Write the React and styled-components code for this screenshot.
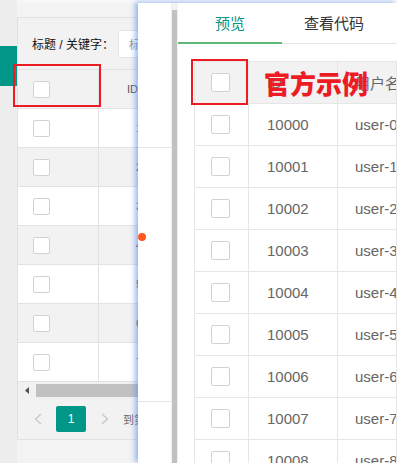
import styled, { createGlobalStyle } from "styled-components";

const GlobalStyle = createGlobalStyle`
  body {
    margin: 0;
    background: #f0f0f0;
    font-family: "Liberation Sans", "Noto Sans CJK SC", sans-serif;
  }
`;

const Screen = styled.div`
  position: relative;
  width: 397px;
  height: 463px;
  overflow: hidden;
  background: #efefef;
`;

/* ---------- page under the layer ---------- */

const Page = styled.div`
  display: flex;
  height: 100%;
`;

const Side = styled.div`
  flex: 0 0 17px;
  padding-top: 46px;
  background: #ededed;
`;

const SideTab = styled.div`
  height: 40px;
  background: #009688;
`;

const Main = styled.div`
  flex: 0 0 520px;
  padding-top: 14px;
  background: #f3f3f3;
  border-top: 3px solid #f7f7f7;
  box-sizing: border-box;
`;

const Card = styled.div`
  border-top: 1px solid #e2e2e2;
  border-left: 1px solid #e2e2e2;
  background: #f2f2f2;
`;

const SearchRow = styled.div`
  display: flex;
  align-items: center;
  height: 51px;
  padding-left: 14px;
`;

const Label = styled.span`
  font-size: 12px;
  color: #111;
  margin-right: 4px;
`;

const SearchInput = styled.div`
  width: 180px;
  height: 28px;
  box-sizing: border-box;
  display: flex;
  align-items: center;
  padding-left: 10px;
  background: #fff;
  border: 1px solid #e6e6e6;
  font-size: 11px;
  color: #999;
`;

const LeftRow = styled.div`
  display: grid;
  grid-template-columns: 81px 1fr;
  height: ${(p) => (p.head ? 40 : 39)}px;
  box-sizing: border-box;
  border-top: ${(p) => (p.head ? "1px solid #e2e2e2" : "none")};
  border-bottom: 1px solid #e2e2e2;
  background: ${(p) => (p.gray ? "#f2f2f2" : "#fff")};
`;

const LeftCell = styled.div`
  display: flex;
  align-items: center;
  padding-left: ${(p) => p.pad}px;
  border-right: ${(p) => (p.first ? "1px solid #e2e2e2" : "none")};
  font-size: 11px;
  color: #555;
`;

const Check = styled.span`
  display: inline-block;
  width: ${(p) => p.size}px;
  height: ${(p) => p.size}px;
  box-sizing: border-box;
  border: 1px solid #d2d2d2;
  border-radius: 2px;
  background: #fff;
`;

const HScroll = styled.div`
  display: flex;
  align-items: center;
  height: 17px;
  background: #f1f1f1;
`;

const ScrollArrow = styled.div`
  flex: 0 0 17px;
  display: flex;
  justify-content: center;
  align-items: center;
`;

const HThumb = styled.div`
  flex: 1;
  height: 13px;
  margin-left: 1px;
  background: #c1c1c1;
`;

const Pager = styled.div`
  display: flex;
  align-items: center;
  gap: 3px;
  height: 40px;
  padding-left: 4px;
  border-bottom: 1px solid #e2e2e2;
`;

const PageArrow = styled.div`
  flex: 0 0 31px;
  display: flex;
  justify-content: center;
  align-items: center;
`;

const PageNum = styled.div`
  width: 30px;
  height: 26px;
  border-radius: 2px;
  background: #009688;
  color: #fff;
  font-size: 12px;
  display: flex;
  align-items: center;
  justify-content: center;
`;

const PageText = styled.span`
  font-size: 11px;
  color: #666;
`;

/* ---------- layer ---------- */

const Layer = styled.div`
  position: absolute;
  left: 138px;
  top: 3px;
  right: 0;
  bottom: 0;
  display: flex;
  background: #fff;
  box-shadow: -3px -1px 5px rgba(90, 145, 240, 0.6);
`;

const LayerNav = styled.div`
  flex: 0 0 33px;
  display: flex;
  flex-direction: column;
`;

const NavBlock = styled.div`
  height: ${(p) => p.h}px;
  border-bottom: 1px solid #e6e6e6;
`;

const Dot = styled.span`
  display: block;
  width: 8px;
  height: 8px;
  margin-top: 85px;
  border-radius: 50%;
  background: #ff5722;
`;

const VScroll = styled.div`
  flex: 0 0 7px;
  display: flex;
  padding-top: 7px;
  box-sizing: border-box;
  background: #f1f1f1;
`;

const VThumb = styled.div`
  width: 5px;
  margin-left: 1px;
  background: #c1c1c1;
`;

const Frame = styled.div`
  flex: 1;
  min-width: 0;
`;

const TabBar = styled.div`
  display: flex;
  height: 41px;
  box-sizing: border-box;
  border-bottom: 1px solid #e6e6e6;
`;

const Tab = styled.div`
  flex: 0 0 104px;
  height: 41px;
  box-sizing: border-box;
  padding-bottom: 3px;
  display: flex;
  align-items: center;
  justify-content: center;
  font-size: 15px;
  color: ${(p) => (p.active ? "#009688" : "#333")};
  box-shadow: ${(p) => (p.active ? "inset 0 -2px 0 #5fb878" : "none")};
`;

const Table = styled.div`
  margin: 17px 0 0 16px;
  border-left: 1px solid #e6e6e6;
`;

const Row = styled.div`
  display: grid;
  grid-template-columns: 54px 89px 1fr;
  height: ${(p) => (p.head ? 43 : 42)}px;
  box-sizing: border-box;
  border-top: ${(p) => (p.head ? "1px solid #e6e6e6" : "none")};
  border-bottom: 1px solid #e6e6e6;
  background: ${(p) => (p.head ? "#f2f2f2" : "#fff")};
`;

const Cell = styled.div`
  display: flex;
  align-items: center;
  padding-left: ${(p) => p.pad}px;
  border-right: 1px solid #e6e6e6;
  font-size: 15px;
  color: #666;
  white-space: nowrap;
  overflow: hidden;
`;

/* ---------- annotations ---------- */

const RedBox = styled.div`
  position: absolute;
  left: ${(p) => p.x}px;
  top: ${(p) => p.y}px;
  width: ${(p) => p.w}px;
  height: ${(p) => p.h}px;
  box-sizing: border-box;
  border: 2px solid #ed1c24;
`;

const RedText = styled.div`
  position: absolute;
  left: 264px;
  top: 66px;
  font-family: "Noto Sans CJK SC", sans-serif;
  font-size: 26px;
  font-weight: 900;
  line-height: 34px;
  color: #ed1c24;
`;

const Chevron = ({ dir }) => (
  <svg width="8" height="12" viewBox="0 0 8 12">
    <polyline
      points={dir === "left" ? "7,1 1.5,6 7,11" : "1,1 6.5,6 1,11"}
      fill="none"
      stroke="#c8c8c8"
      strokeWidth="1.3"
    />
  </svg>
);

const leftRows = [1, 2, 3, 4, 5, 6, 7];
const users = [0, 1, 2, 3, 4, 5, 6, 7, 8];

export default function App() {
  return (
    <Screen>
      <GlobalStyle />
      <Page>
        <Side>
          <SideTab />
        </Side>
        <Main>
          <Card>
            <SearchRow>
              <Label>标题 / 关键字：</Label>
              <SearchInput>标题/关键字</SearchInput>
            </SearchRow>
            <LeftRow head gray>
              <LeftCell first pad={15}>
                <Check size={17} />
              </LeftCell>
              <LeftCell pad={28}>ID</LeftCell>
            </LeftRow>
            {leftRows.map((n) => (
              <LeftRow key={n} gray={n % 2 === 0}>
                <LeftCell first pad={15}>
                  <Check size={17} />
                </LeftCell>
                <LeftCell pad={37}>{n}</LeftCell>
              </LeftRow>
            ))}
            <HScroll>
              <ScrollArrow>
                <svg width="4" height="7" viewBox="0 0 4 7">
                  <polygon points="4,0 0,3.5 4,7" fill="#505050" />
                </svg>
              </ScrollArrow>
              <HThumb />
            </HScroll>
            <Pager>
              <PageArrow>
                <Chevron dir="left" />
              </PageArrow>
              <PageNum>1</PageNum>
              <PageArrow>
                <Chevron dir="right" />
              </PageArrow>
              <PageText>到第</PageText>
            </Pager>
          </Card>
        </Main>
      </Page>

      <Layer>
        <LayerNav>
          <NavBlock h={144} />
          <NavBlock h={253}>
            <Dot />
          </NavBlock>
        </LayerNav>
        <VScroll>
          <VThumb />
        </VScroll>
        <Frame>
          <TabBar>
            <Tab active>预览</Tab>
            <Tab>查看代码</Tab>
          </TabBar>
          <Table>
            <Row head>
              <Cell pad={16}>
                <Check size={19} />
              </Cell>
              <Cell pad={18}>ID</Cell>
              <Cell pad={17}>用户名</Cell>
            </Row>
            {users.map((i) => (
              <Row key={i}>
                <Cell pad={16}>
                  <Check size={19} />
                </Cell>
                <Cell pad={18}>{10000 + i}</Cell>
                <Cell pad={17}>user-{i}</Cell>
              </Row>
            ))}
          </Table>
        </Frame>
      </Layer>

      <RedBox x={13} y={64} w={88} h={43} />
      <RedBox x={191} y={59} w={57} h={46} />
      <RedText>官方示例</RedText>
    </Screen>
  );
}
